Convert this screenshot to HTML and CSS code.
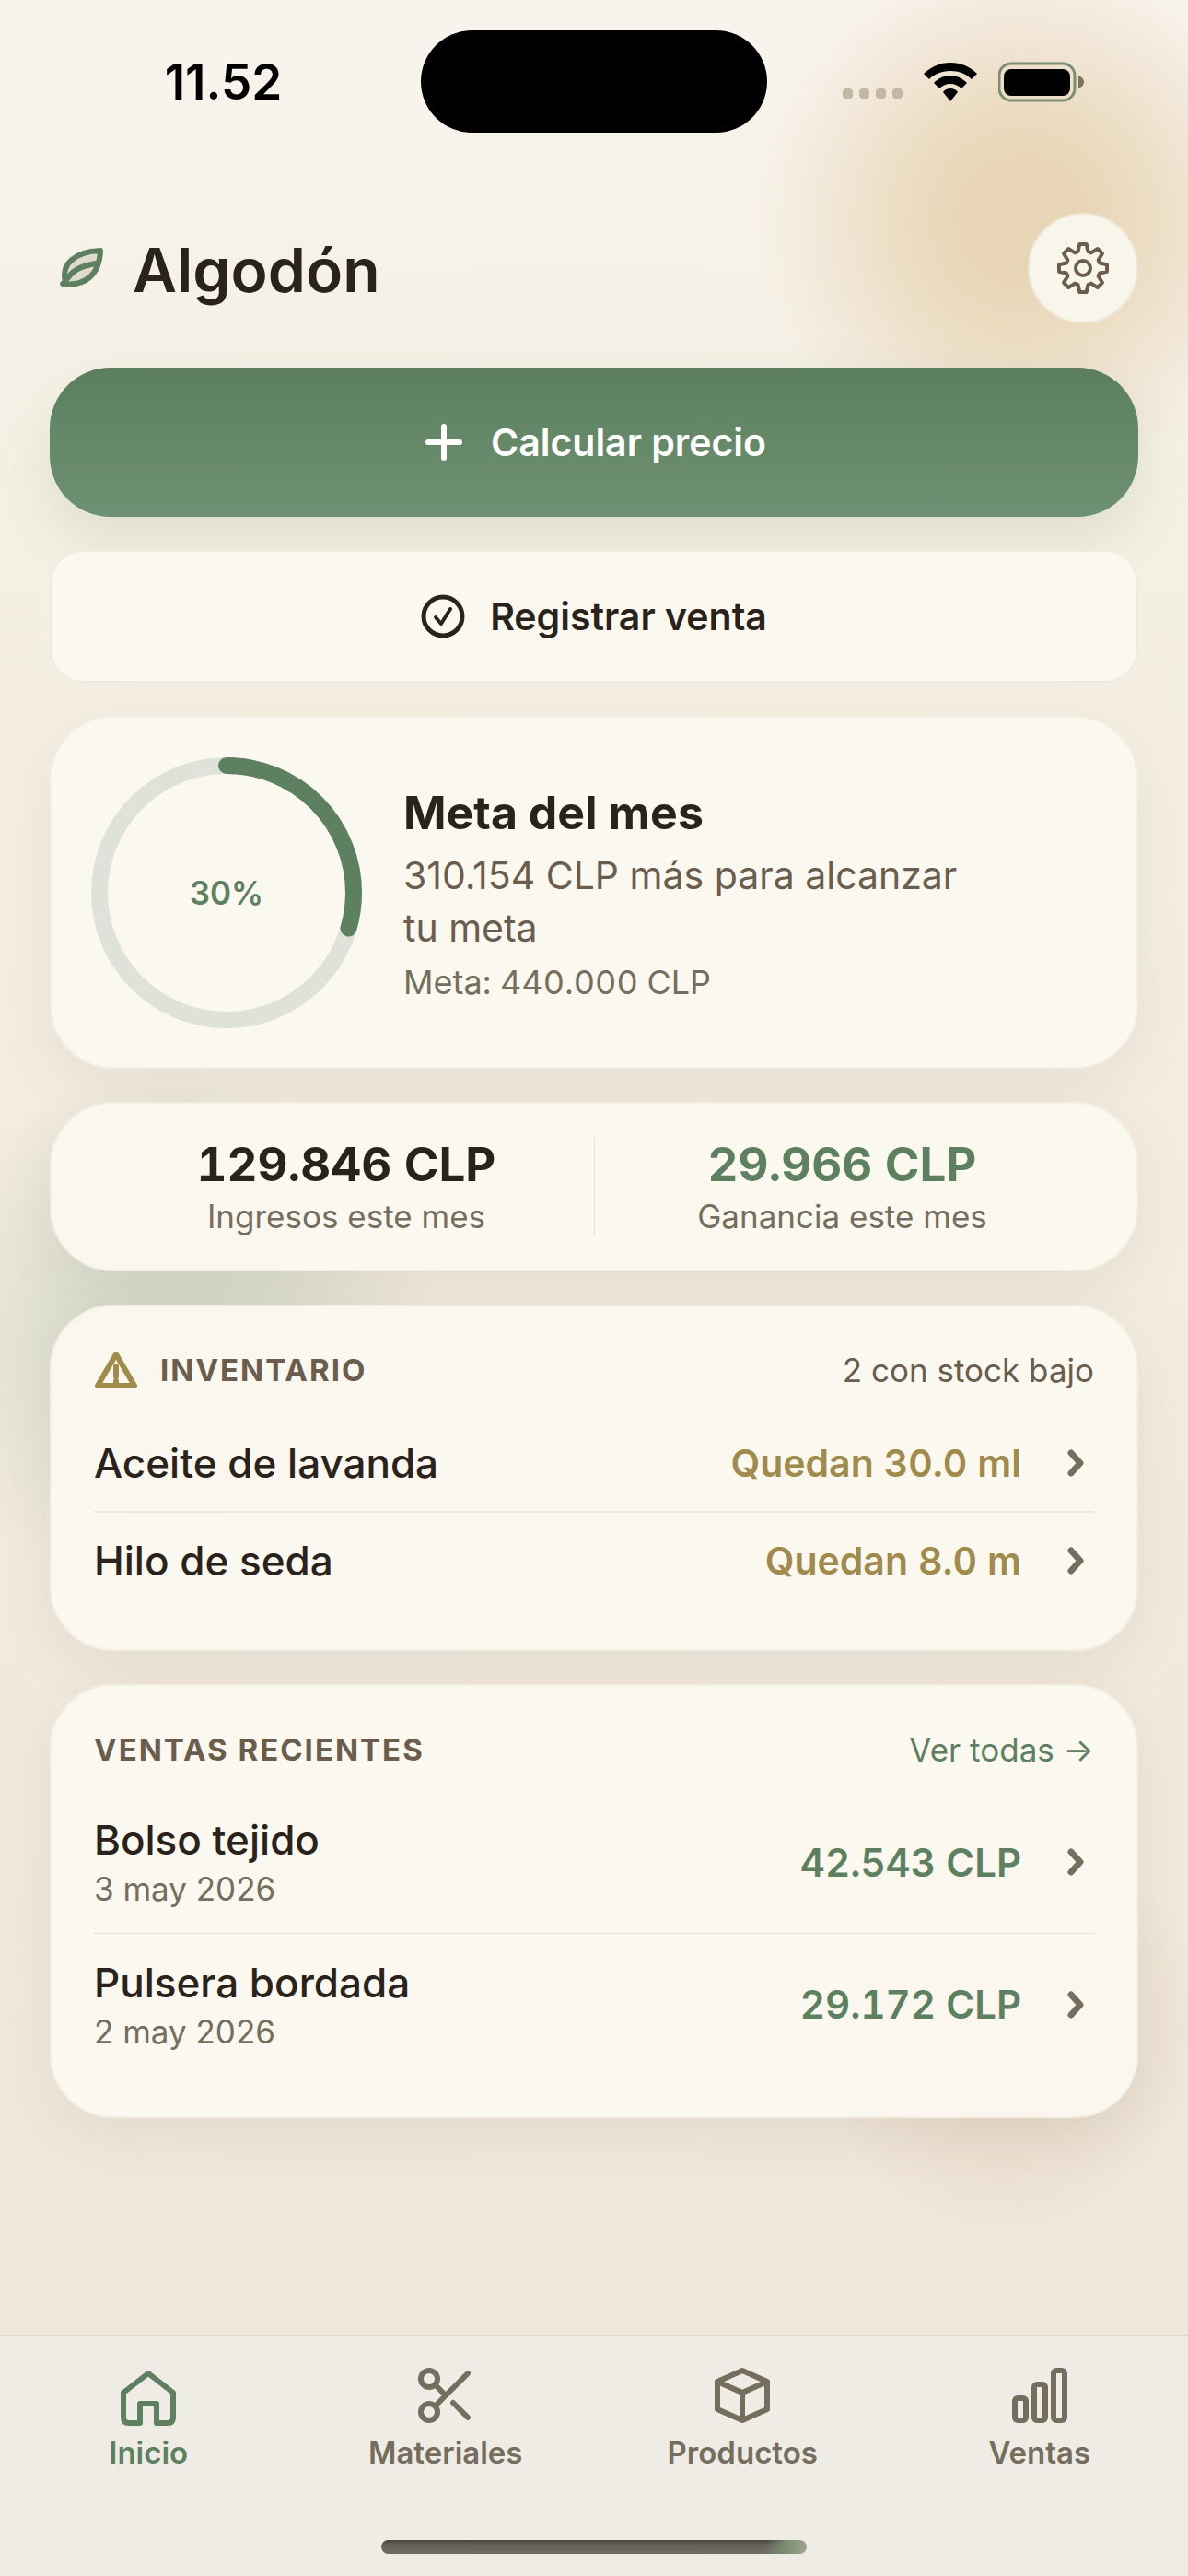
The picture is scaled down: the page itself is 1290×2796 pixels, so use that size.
FILE: index.html
```html
<!DOCTYPE html>
<html lang="es">
<head>
    <meta charset="UTF-8">
    <meta name="viewport" content="width=device-width, initial-scale=1.0">
    <title>Algodón</title>
    <link rel="stylesheet" href="styles.css">
</head>
<body>
    <div class="app">
        <div class="glow glow-gold"></div>
        <div class="glow glow-green"></div>
        <div class="glow glow-clay"></div>

        <div class="status-bar">
            <div class="time">11.52</div>
            <div class="island"></div>
            <div class="status-icons">
                <div class="signal"><i></i><i></i><i></i><i></i></div>
                <svg class="wifi" viewBox="0 0 58 42" aria-hidden="true">
                    <path d="M29 0C18 0 8 4 0 12l6 6c6-6 14-9 23-9s17 3 23 9l6-6C50 4 40 0 29 0z"/>
                    <path d="M29 14c-7 0-13 3-18 8l6 6c3-3 7-5 12-5s9 2 12 5l6-6c-5-5-11-8-18-8z"/>
                    <path d="M29 28c-3 0-6 1-8 4l8 10 8-10c-2-3-5-4-8-4z"/>
                </svg>
                <svg class="battery" viewBox="0 0 93 44" aria-hidden="true">
                    <rect x="1" y="2" width="82" height="40" rx="13" fill="none" stroke="#7b8f74" stroke-width="3"/>
                    <rect x="6" y="8" width="72" height="29" rx="8"/>
                    <path d="M87 15c5 2 6 5 6 7s-1 5-6 7z" fill="#7c745f"/>
                </svg>
            </div>
        </div>

        <header class="header">
            <svg class="leaf" viewBox="0 0 48 44" aria-hidden="true">
                <path class="leaf-body" d="M3 39L6 37C1 18 16 4 44 3C43 29 28 42 3 39z"/>
                <path d="M5 38C13 24 22 20 39 17"/>
            </svg>
            <h1>Algodón</h1>
            <button class="settings" aria-label="Ajustes">
                <svg viewBox="0 0 60 60" aria-hidden="true">
                    <path d="M26.3 4h7.4l1.8 8 3.3 1.4 7-4.4 5.2 5.2-4.4 7 1.4 3.3 8 1.8v7.4l-8 1.8-1.4 3.3 4.4 7-5.2 5.2-7-4.4-3.3 1.4-1.8 8h-7.4l-1.8-8-3.3-1.4-7 4.4-5.2-5.2 4.4-7-1.4-3.3-8-1.8v-7.4l8-1.8 1.4-3.3-4.4-7 5.2-5.2 7 4.4 3.3-1.4z"/>
                    <circle cx="30" cy="30" r="8"/>
                </svg>
            </button>
        </header>

        <main class="content">
            <button class="btn btn-primary">
                <svg viewBox="0 0 48 48" aria-hidden="true"><path d="M24 7v34M7 24h34"/></svg>
                Calcular precio
            </button>
            <button class="btn btn-secondary">
                <svg viewBox="0 0 48 48" aria-hidden="true"><circle cx="24" cy="24" r="21"/><path d="M16 25l6 7 10-16"/></svg>
                Registrar venta
            </button>

            <section class="card goal">
                <div class="ring">
                    <svg viewBox="0 0 294 294" aria-hidden="true">
                        <circle class="ring-track" cx="147" cy="147" r="138"/>
                        <circle class="ring-value" cx="147" cy="147" r="138" pathLength="1000" stroke-dasharray="295 1000"/>
                    </svg>
                    <span>30%</span>
                </div>
                <div class="goal-text">
                    <h2>Meta del mes</h2>
                    <p>310.154 CLP más para alcanzar<br>tu meta</p>
                    <small>Meta: 440.000 CLP</small>
                </div>
            </section>

            <section class="card stats">
                <div class="stat">
                    <b>129.846 CLP</b>
                    <span>Ingresos este mes</span>
                </div>
                <div class="stat profit">
                    <b>29.966 CLP</b>
                    <span>Ganancia este mes</span>
                </div>
            </section>

            <section class="card list">
                <div class="list-head">
                    <svg class="warning" viewBox="0 0 48 44" aria-hidden="true"><path d="M24 5L44 39H4z"/><path d="M24 18v11M24 34v1"/></svg>
                    <h3>Inventario</h3>
                    <span>2 con stock bajo</span>
                </div>
                <a class="row" href="#">
                    <span class="name">Aceite de lavanda</span>
                    <span class="amount low">Quedan 30.0 ml</span>
                    <svg class="chevron" viewBox="0 0 18 30" aria-hidden="true"><path d="M4 4l10 11L4 26"/></svg>
                </a>
                <a class="row" href="#">
                    <span class="name">Hilo de seda</span>
                    <span class="amount low">Quedan 8.0 m</span>
                    <svg class="chevron" viewBox="0 0 18 30" aria-hidden="true"><path d="M4 4l10 11L4 26"/></svg>
                </a>
            </section>

            <section class="card list sales">
                <div class="list-head">
                    <h3>Ventas recientes</h3>
                    <a href="#">Ver todas →</a>
                </div>
                <a class="row" href="#">
                    <span class="name">Bolso tejido<small>3 may 2026</small></span>
                    <span class="amount">42.543 CLP</span>
                    <svg class="chevron" viewBox="0 0 18 30" aria-hidden="true"><path d="M4 4l10 11L4 26"/></svg>
                </a>
                <a class="row" href="#">
                    <span class="name">Pulsera bordada<small>2 may 2026</small></span>
                    <span class="amount">29.172 CLP</span>
                    <svg class="chevron" viewBox="0 0 18 30" aria-hidden="true"><path d="M4 4l10 11L4 26"/></svg>
                </a>
            </section>
        </main>

        <nav class="tabs">
            <a class="active" href="#">
                <svg viewBox="0 0 72 72" aria-hidden="true"><path d="M36 10L9 31v27q0 6 6 6h12V43h18v21h12q6 0 6-6V31z"/></svg>
                Inicio
            </a>
            <a href="#">
                <svg viewBox="0 0 72 72" aria-hidden="true"><circle cx="18" cy="16" r="9"/><circle cx="18" cy="52" r="9"/><path d="M60 10L25 45M44 42l16 16M25 23l11 11"/></svg>
                Materiales
            </a>
            <a href="#">
                <svg viewBox="0 0 72 72" aria-hidden="true"><path d="M36 7l27 12v30L36 61 9 49V19zM9 19l27 12 27-12M36 31v30"/></svg>
                Productos
            </a>
            <a href="#">
                <svg viewBox="0 0 72 72" aria-hidden="true"><rect x="9" y="37" width="12" height="24" rx="3"/><rect x="30" y="22" width="12" height="39" rx="3"/><rect x="51" y="7" width="12" height="54" rx="3"/></svg>
                Ventas
            </a>
        </nav>
        <div class="home-indicator"></div>
    </div>
</body>
</html>
```
FILE: styles.css
```css
* {
    box-sizing: border-box;
}

body {
    margin: 0;
    font-family: Inter, "Liberation Sans", sans-serif;
    color: #2a231c;
}

h1, h2, h3, p {
    margin: 0;
}

a {
    color: inherit;
    text-decoration: none;
}

button {
    font-family: inherit;
    color: inherit;
    cursor: pointer;
}

svg {
    display: block;
    flex: none;
}

.app {
    position: relative;
    display: flex;
    flex-direction: column;
    min-height: 100vh;
    overflow: hidden;
    background: linear-gradient(#f8f3ec, #f5f0e4 20%, #f2eade 60%, #f0e7d9 90%);
}

/* soft colour spots behind the page */
.glow {
    position: absolute;
    border-radius: 50%;
}

.glow-gold {
    top: -50px;
    right: -110px;
    width: 580px;
    height: 580px;
    background: radial-gradient(closest-side, #e8d5b5 20%, #ecdec4 48%, #efe2d0cc 68%, #f4ece000);
}

.glow-green {
    top: 1160px;
    left: -100px;
    width: 580px;
    height: 580px;
    background: radial-gradient(closest-side, #d4d6c9, #dcdecf 40%, #e4e3d500);
}

.glow-clay {
    top: 1980px;
    right: -20px;
    width: 440px;
    height: 440px;
    background: radial-gradient(closest-side, #e3d6c8, #e8dccd 50%, #efe6d800);
}

.status-bar {
    position: relative;
    display: grid;
    grid-template-columns: 1fr 376px 1fr;
    align-items: center;
    height: 144px;
    padding-top: 33px;
    color: #000;
}

.time {
    padding-left: 28px;
    font-size: 53px;
    font-weight: 600;
    text-align: center;
}

.island {
    height: 111px;
    border-radius: 56px;
    background: #000;
}

.status-icons {
    display: flex;
    align-items: center;
    justify-content: flex-end;
    gap: 23px;
    padding-right: 113px;
}

.signal {
    display: flex;
    gap: 7px;
    margin-top: 26px;
}

.signal i {
    width: 11px;
    height: 11px;
    border-radius: 4px;
    background: #c3b8a3;
}

.wifi {
    width: 58px;
    height: 42px;
}

.battery {
    width: 93px;
    height: 44px;
}

.header {
    position: relative;
    display: flex;
    align-items: center;
    margin-top: 87px;
    padding: 0 54px 0 65px;
}

.leaf {
    width: 48px;
    height: 44px;
    margin-right: 31px;
    fill: none;
    stroke: #5c8060;
    stroke-width: 6;
    stroke-linecap: round;
    stroke-linejoin: round;
}

.leaf-body {
    fill: #dfdccf;
}

h1 {
    flex: 1;
    padding-top: 4px;
    font-size: 66px;
    font-weight: 600;
    line-height: 84px;
}

.settings {
    display: grid;
    place-items: center;
    width: 120px;
    height: 120px;
    padding: 0;
    border: 2px solid #eee8da;
    border-radius: 50%;
    background: #f8f5ea;
}

.settings svg {
    width: 60px;
    height: 60px;
    fill: none;
    stroke: #6b5d4d;
    stroke-width: 4;
    stroke-linejoin: round;
}

.content {
    position: relative;
    display: flex;
    flex-direction: column;
    gap: 36px;
    padding: 48px 54px;
}

.btn {
    display: flex;
    align-items: center;
    justify-content: center;
    gap: 27px;
    font-size: 41px;
    font-weight: 600;
}

.btn svg {
    width: 48px;
    height: 48px;
    fill: none;
    stroke: currentColor;
    stroke-width: 5;
    stroke-linecap: round;
    stroke-linejoin: round;
}

.btn-primary {
    height: 162px;
    border: 0;
    border-radius: 66px;
    background: linear-gradient(#5b7f5e, #6f9173);
    box-shadow: 0 24px 60px #5c806028;
    color: #fff;
}

.btn-primary svg {
    stroke-width: 6;
}

.btn-secondary {
    height: 144px;
    border: 2px solid #efebe0;
    border-radius: 36px;
    background: #fbf8f0;
}

.btn-secondary path {
    stroke-width: 4;
}

.card {
    border: 2px solid #f3efe5;
    border-radius: 69px;
    background: #fbf8f0f7;
    box-shadow: 0 18px 60px #6b5d4d18;
}

.goal {
    display: flex;
    align-items: center;
    gap: 45px;
    height: 383px;
    padding: 0 43px;
}

.ring {
    display: grid;
    place-items: center;
    font-size: 35px;
    font-weight: 600;
    color: #5c8060;
}

.ring > * {
    grid-area: 1 / 1;
}

.ring svg {
    width: 294px;
    height: 294px;
    transform: rotate(-90deg);
    fill: none;
    stroke-width: 18;
}

.ring-track {
    stroke: #dfe2d8;
}

.ring-value {
    stroke: #5c8060;
    stroke-linecap: round;
}

.goal-text {
    padding-top: 6px;
}

h2 {
    font-size: 50px;
    font-weight: 700;
    line-height: 66px;
}

.goal-text p {
    margin-top: 7px;
    font-size: 41px;
    line-height: 57px;
    color: #6b5d4d;
}

.goal-text small {
    display: block;
    margin-top: 2px;
    font-size: 36px;
    line-height: 57px;
    font-variant-numeric: tabular-nums;
    color: #756e5e;
}

.stats {
    display: grid;
    grid-template-columns: 1fr 1fr;
    padding: 36px 51px;
}

.stat {
    display: flex;
    flex-direction: column;
    align-items: center;
}

.stat + .stat {
    border-left: 1px solid #e6e2d8;
}

.stat b {
    font-size: 51px;
    line-height: 60px;
    font-variant-numeric: tabular-nums;
}

.stat span {
    margin-top: 4px;
    font-size: 35px;
    line-height: 44px;
    color: #756e5e;
}

.profit b {
    color: #5c8060;
}

.list {
    padding: 36px 46px 45px;
}

.list-head {
    display: flex;
    align-items: center;
    height: 66px;
    margin-bottom: 15px;
    font-size: 35px;
    color: #6b5d4d;
}

.list-head a {
    color: #5c8060;
}

.warning {
    width: 48px;
    height: 44px;
    margin-right: 24px;
    fill: none;
    stroke: #a08a4c;
    stroke-width: 6;
    stroke-linecap: round;
    stroke-linejoin: round;
}

h3 {
    flex: 1;
    font-size: 33px;
    font-weight: 700;
    letter-spacing: 2px;
    text-transform: uppercase;
}

.row {
    display: flex;
    align-items: center;
    height: 105px;
}

.row + .row {
    border-top: 2px solid #ece8dc;
}

.name {
    flex: 1;
    font-size: 44px;
    font-weight: 500;
    line-height: 58px;
}

.name small {
    display: block;
    font-size: 35px;
    font-weight: 400;
    line-height: 48px;
    color: #756e5e;
}

.amount {
    font-size: 42px;
    font-weight: 600;
    font-variant-numeric: tabular-nums;
    color: #5c8060;
}

.low {
    font-size: 41px;
    color: #a08a4c;
}

.chevron {
    width: 18px;
    height: 30px;
    margin: 0 11px 0 50px;
    fill: none;
    stroke: #756e5e;
    stroke-width: 7;
    stroke-linecap: round;
    stroke-linejoin: round;
}

.sales .list-head {
    margin-bottom: 12px;
}

.sales .row {
    height: 154px;
}

.sales .row + .row {
    border-top: 1px solid #e6e2d8;
}

.tabs {
    position: relative;
    display: grid;
    grid-template-columns: repeat(4, 1fr);
    height: 262px;
    margin-top: auto;
    padding-top: 30px;
    border-top: 2px solid #dfdbd0;
    background: #efece6;
}

.tabs a {
    display: flex;
    flex-direction: column;
    align-items: center;
    font-size: 33px;
    font-weight: 600;
    line-height: 48px;
    color: #756e5e;
}

.tabs svg {
    width: 72px;
    height: 72px;
    fill: none;
    stroke: currentColor;
    stroke-width: 6;
    stroke-linecap: round;
    stroke-linejoin: round;
}

.tabs .active {
    color: #5c8060;
}

.home-indicator {
    position: absolute;
    bottom: 24px;
    left: 50%;
    width: 462px;
    height: 15px;
    border-radius: 8px;
    transform: translateX(-50%);
    background: linear-gradient(100deg, #0000 90%, #7b8f74 95%, #a3a594), linear-gradient(#46433d, #65625c 35%, #706d67);
}
```
